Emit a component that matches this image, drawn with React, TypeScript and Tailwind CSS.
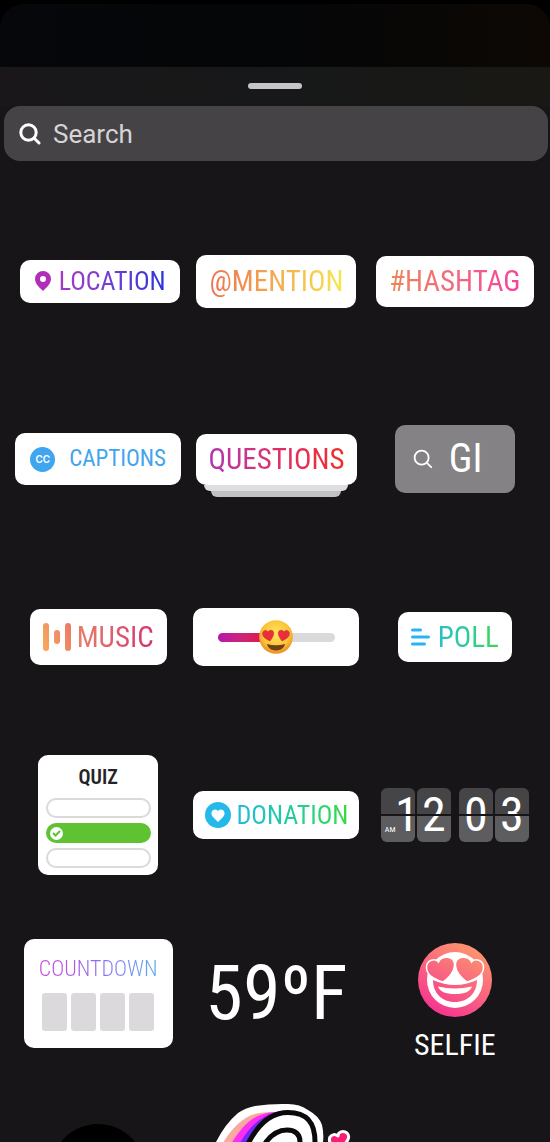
import type { ReactNode } from "react";

const titleFont = "font-['Roboto_Condensed','Liberation_Sans_Narrow',sans-serif]";

function Cell({ children }: { children: ReactNode }) {
    return <div className="flex h-[178px] items-center justify-center">{children}</div>
}

function PinIcon() {
    return (
        <svg className="h-5 w-4" viewBox="0 0 16 20" aria-hidden="true">
            <path fill="#b12fb8" fillRule="evenodd" d="M8 0a8 8 0 0 1 8 8c0 5-5 9-8 12C5 17 0 13 0 8a8 8 0 0 1 8-8Zm0 5a3 3 0 1 0 0 6 3 3 0 0 0 0-6Z" />
        </svg>
    )
}

function SearchIcon({ className, strokeWidth }: { className: string; strokeWidth: number }) {
    return (
        <svg className={className} viewBox="0 0 22 22" fill="none" stroke="white" strokeWidth={strokeWidth} strokeLinecap="round" aria-hidden="true">
            <circle cx="9.5" cy="9.5" r="7.7" />
            <path d="M15.2 15.2 20 20" />
        </svg>
    )
}

function MusicIcon() {
    return (
        <svg className="h-7 w-7" viewBox="0 0 28 28" aria-hidden="true">
            <defs>
                <linearGradient id="music" gradientUnits="userSpaceOnUse" x1="0" y1="20" x2="28" y2="8">
                    <stop stopColor="#f7a75c" />
                    <stop offset="1" stopColor="#ea7b69" />
                </linearGradient>
            </defs>
            <g fill="url(#music)">
                <rect width="6" height="28" rx="3" />
                <rect x="11" y="7" width="6" height="14" rx="3" />
                <rect x="22" width="6" height="28" rx="3" />
            </g>
        </svg>
    )
}

function PollIcon() {
    return (
        <svg className="h-[18px] w-[19px]" viewBox="0 0 19 18" stroke="#27b5f0" strokeWidth="3" strokeLinecap="round" aria-hidden="true">
            <path d="M1.5 2h8M1.5 9h16M1.5 16h12" />
        </svg>
    )
}

function DonationIcon() {
    return (
        <svg className="size-[26px]" viewBox="0 0 26 26" aria-hidden="true">
            <circle cx="13" cy="13" r="13" fill="#23b9ea" />
            <path fill="white" d="M13 20 8 15C4.800 11.500 7 7.500 10 7.500c1.500 0 2.500.8 3 1.800.5-1 1.500-1.800 3-1.800 3 0 5.200 4 2 7.500Z" />
        </svg>
    )
}

function HeartEyes() {
    return (
        <svg className="size-[34px]" viewBox="0 0 34 34" aria-hidden="true">
            <defs>
                <radialGradient id="face" cx=".5" cy=".4" r=".6">
                    <stop stopColor="#ffe45c" />
                    <stop offset=".65" stopColor="#fbc63a" />
                    <stop offset="1" stopColor="#ea8d22" />
                </radialGradient>
            </defs>
            <circle cx="17" cy="17" r="16.800" fill="url(#face)" />
            <g fill="#ea2f3b" stroke="#c91f30" strokeWidth=".5">
                <path d="M11 21C7 19 3.500 17 3.600 13.500c.1-3.300 4-4.200 5.400-1.500 1.600-2.800 6-2 5.700 1.500-.2 2.700-2 5-3.700 7.500Z" />
                <path d="M23 21c4-2 7.500-4 7.400-7.500-.1-3.300-4-4.200-5.400-1.500-1.600-2.800-6-2-5.700 1.500.2 2.700 2 5 3.700 7.500Z" />
            </g>
            <path d="M8 24q9 2.500 18 0c-1 4.500-5 6.500-9 6.500S9 28.500 8 24Z" fill="#704018" />
        </svg>
    )
}

function SelfieIcon() {
    return (
        <svg className="size-[74px]" viewBox="0 0 74 74" aria-hidden="true">
            <defs>
                <linearGradient id="selfie" gradientUnits="userSpaceOnUse" x1="55" y1="8" x2="22" y2="68">
                    <stop stopColor="#fd9070" />
                    <stop offset="1" stopColor="#f53a8e" />
                </linearGradient>
            </defs>
            <circle cx="37" cy="37" r="37" fill="url(#selfie)" />
            <circle cx="37" cy="37" r="28" fill="white" />
            <g fill="url(#selfie)" stroke="white" strokeWidth="1.500">
                <path d="M25 39C15 36 8.500 31 8.500 24.500 8.500 17 17 14.500 20.500 19c2.500-7 17-7 16 4-.7 6-6 12-11.500 16Z" />
                <path d="M49 39c10-3 16.500-8 16.500-14.500C65.500 17 57 14.500 53.500 19c-2.500-7-17-7-16 4 .7 6 6 12 11.500 16Z" />
            </g>
            <path fill="url(#selfie)" d="M15 37q22 10 44 0c0 13-9 22-22 22S15 50 15 37Z" />
            <path fill="white" d="M20 43.500q17 4 34 0-2.500 7.500-17 7.500t-17-7.500Z" />
        </svg>
    )
}

function ClockTile({ digit, note }: { digit: string; note?: string }) {
    return (
        <span className={`relative flex h-[54px] w-[34px] rounded-md bg-linear-to-b from-[#454446] from-50% to-[#5d5c5e] to-50% text-white ${note ? "justify-end" : "justify-center"}`}>
            {note && <span className="absolute bottom-1.5 left-1 text-[8px] leading-3">{note}</span>}
            <span className={note ? "-mr-1" : ""}>{digit}</span>
            <span className="absolute inset-x-0 top-[26px] h-0.5 bg-[#171518]" />
        </span>
    )
}

function LetterSticker() {
    return (
        <svg className="h-[134px] w-[150px] overflow-visible" viewBox="0 0 150 134" fill="none" aria-hidden="true">
            <path fill="white" d="M0 66Q8 52 15 38 24 20 37 9 44 4 54 2 70-.5 87 0q12 0 20 6 11 6 14 15 2 8 1 17v80H0Z" />
            <path fill="#f8aaa0" d="M8 66C22 36 35 13 58 9q15-2 30-1L60 66Z" />
            <path fill="#ff2cf2" d="M17 66C30 38 42 14 66 9q12-2 24-1L60 66Z" />
            <path fill="#7428f5" d="M25 66C38 38 50 15 75 8q12-2 20 0L60 66Z" />
            <path stroke="#0a0a0c" strokeWidth="5" fill="white" d="M34 66Q41 51 48 38C58 19 71 8.500 87 8.500c20 0 27 11 27 29.500v62H34Z" />
            <path stroke="#0a0a0c" strokeWidth="5" fill="white" d="M52 66Q58 49 65 38c6-8 13-12 21-12 9 0 13 5 13 12v40H52Z" />
            <path fill="#f91d78" stroke="white" strokeWidth="3" strokeLinejoin="round" d="M134 48c-4-6-7-11-5-15 2-3 5-3 8-1 0-4 5-6 9-3 4 4 1 10-12 19Z" />
        </svg>
    )
}

const sticker = "flex items-center justify-center rounded-[10px] bg-white leading-9"

function App() {
    return (
        <main className="flex h-screen flex-col overflow-hidden bg-black">
            <div className="pt-1">
                <div className="h-[63px] rounded-t-3xl bg-linear-to-r from-[#06070a] via-[#050608] to-[#0d0804]" />
            </div>

            <section className="flex min-h-0 flex-1 flex-col bg-[#171518]">
                <div className="flex justify-center bg-linear-to-r from-[#191719] via-[#171819] to-[#191814] pt-4 pb-[17px]">
                    <div className="h-1.5 w-[54px] rounded-full bg-[#c6c4c7]" />
                </div>

                <label className="mr-0.5 ml-1 flex h-[55px] shrink-0 items-center gap-3 rounded-2xl bg-[#454346] px-[15px]">
                    <SearchIcon className="size-[22px]" strokeWidth={3} />
                    <input type="text" aria-label="Search" placeholder="Search" className="min-w-0 flex-1 bg-transparent font-['Roboto','Liberation_Sans',sans-serif] text-[26px] leading-8 text-white outline-none placeholder:text-[#d6d4d6]" />
                </label>

                <div className={`mt-[31px] grid min-h-0 flex-1 auto-rows-[178px] grid-cols-3 overflow-y-auto pr-1.5 pl-[9px] [scrollbar-width:none] ${titleFont}`}>
                    <Cell>
                        <button className={`${sticker} ml-1 h-[43px] w-[160px] gap-2 text-[26px]`}>
                            <PinIcon />
                            <span className="bg-linear-to-r from-[#a638c4] to-[#2632dc] bg-clip-text text-transparent">LOCATION</span>
                        </button>
                    </Cell>
                    <Cell>
                        <button className={`${sticker} h-[53px] w-[160px] text-[29px]`}>
                            <span className="bg-linear-to-r from-[#ee704f] via-[#f3aa50] to-[#f4e84e] bg-clip-text text-transparent">@MENTION</span>
                        </button>
                    </Cell>
                    <Cell>
                        <button className={`${sticker} h-[51px] w-[158px] text-[29px]`}>
                            <span className="bg-linear-to-r from-[#ee8454] to-[#f6409c] bg-clip-text text-transparent">#HASHTAG</span>
                        </button>
                    </Cell>

                    <Cell>
                        <button className={`${sticker} h-[52px] w-[166px] gap-3.5 text-[23px] text-[#3fa5ee]`}>
                            <span className="flex size-[25px] items-center justify-center rounded-full bg-[#3fa5ee] font-['Inter',sans-serif] text-[10px] font-semibold text-white">CC</span>
                            CAPTIONS
                        </button>
                    </Cell>
                    <Cell>
                        <button className="flex flex-col items-center pt-3">
                            <span className={`${sticker} h-[51px] w-[161px] text-[29px]`}>
                                <span className="bg-linear-to-r from-[#b133b2] via-[#dd2f68] to-[#ed2e24] bg-clip-text text-transparent">QUESTIONS</span>
                            </span>
                            <span className="h-1.5 w-[144px] rounded-b-md bg-[#dfdde0]" />
                            <span className="h-1.5 w-[130px] rounded-b-md bg-[#c1c0c2]" />
                        </button>
                    </Cell>
                    <Cell>
                        <button className="flex h-[68px] w-[120px] items-center gap-4 rounded-[10px] bg-[#848285] pl-[18px] text-[40px] leading-none text-white">
                            <SearchIcon className="size-5" strokeWidth={2} />
                            GI
                        </button>
                    </Cell>

                    <Cell>
                        <button className={`${sticker} h-[56px] w-[137px] gap-1.5 text-[29px]`}>
                            <MusicIcon />
                            <span className="bg-linear-to-r from-[#e97e68] to-[#d52c70] bg-clip-text text-transparent">MUSIC</span>
                        </button>
                    </Cell>
                    <Cell>
                        <div className={`${sticker} relative h-[58px] w-[166px]`}>
                            <div className="flex h-[9px] w-[117px] items-center justify-center rounded-full bg-linear-to-r from-[#b515aa] via-[#e50f3c] via-40% to-[#dad9db] to-40%">
                                <HeartEyes />
                            </div>
                            <input type="range" aria-label="Emoji slider" className="absolute inset-0 opacity-0" />
                        </div>
                    </Cell>
                    <Cell>
                        <button className={`${sticker} h-[50px] w-[114px] gap-2 text-[29px]`}>
                            <PollIcon />
                            <span className="bg-linear-to-r from-[#2bbfc8] to-[#3dd64b] bg-clip-text text-transparent">POLL</span>
                        </button>
                    </Cell>

                    <Cell>
                        <button className="flex h-[120px] w-[120px] flex-col items-center gap-[5px] rounded-[10px] bg-white pt-2.5 text-[20px] leading-6 font-semibold text-[#242326]">
                            <span className="mb-1">QUIZ</span>
                            <span className="h-5 w-[105px] rounded-full border-2 border-[#dad9db]" />
                            <span className="flex h-5 w-[105px] items-center rounded-full bg-[#5fc233] pl-1">
                                <svg className="size-[13px]" viewBox="0 0 13 13" aria-hidden="true">
                                    <circle cx="6.500" cy="6.500" r="6.500" fill="white" />
                                    <path d="m3.500 6.500 2 2 4-4" fill="none" stroke="#5fc233" strokeWidth="2" strokeLinecap="round" />
                                </svg>
                            </span>
                            <span className="h-5 w-[105px] rounded-full border-2 border-[#dad9db]" />
                        </button>
                    </Cell>
                    <Cell>
                        <button className={`${sticker} h-[48px] w-[166px] gap-1.5 text-[26px]`}>
                            <DonationIcon />
                            <span className="bg-linear-to-r from-[#25b9dc] to-[#35db37] bg-clip-text text-transparent">DONATION</span>
                        </button>
                    </Cell>
                    <Cell>
                        <button className="flex gap-2 text-[48px] leading-[54px]">
                            <span className="flex gap-0.5">
                                <ClockTile digit="1" note="AM" />
                                <ClockTile digit="2" />
                            </span>
                            <span className="flex gap-0.5">
                                <ClockTile digit="0" />
                                <ClockTile digit="3" />
                            </span>
                        </button>
                    </Cell>

                    <Cell>
                        <button className="flex h-[109px] w-[149px] flex-col items-center gap-3 rounded-[10px] bg-white pt-[18px] text-[22px] leading-6 font-light">
                            <span className="bg-linear-to-r from-[#c63fdb] via-[#8f6cf0] to-[#4fa9ef] bg-clip-text text-transparent">COUNTDOWN</span>
                            <span className="flex gap-1">
                                {[0, 1, 2, 3].map((i) => (
                                    <span key={i} className="h-[38px] w-[25px] rounded-[3px] bg-[#dbd9dc]" />
                                ))}
                            </span>
                        </button>
                    </Cell>
                    <Cell>
                        <button className="text-[76px] leading-none text-white">59ºF</button>
                    </Cell>
                    <Cell>
                        <button className="flex flex-col items-center gap-3 pt-[18px] text-[30px] leading-8 text-white">
                            <SelfieIcon />
                            SELFIE
                        </button>
                    </Cell>

                    <Cell>
                        <button aria-label="Round sticker" className="size-[94px] rounded-full bg-black" />
                    </Cell>
                    <Cell>
                        <button aria-label="Letter sticker">
                            <LetterSticker />
                        </button>
                    </Cell>
                </div>
            </section>
        </main>
    )
}

export default App
